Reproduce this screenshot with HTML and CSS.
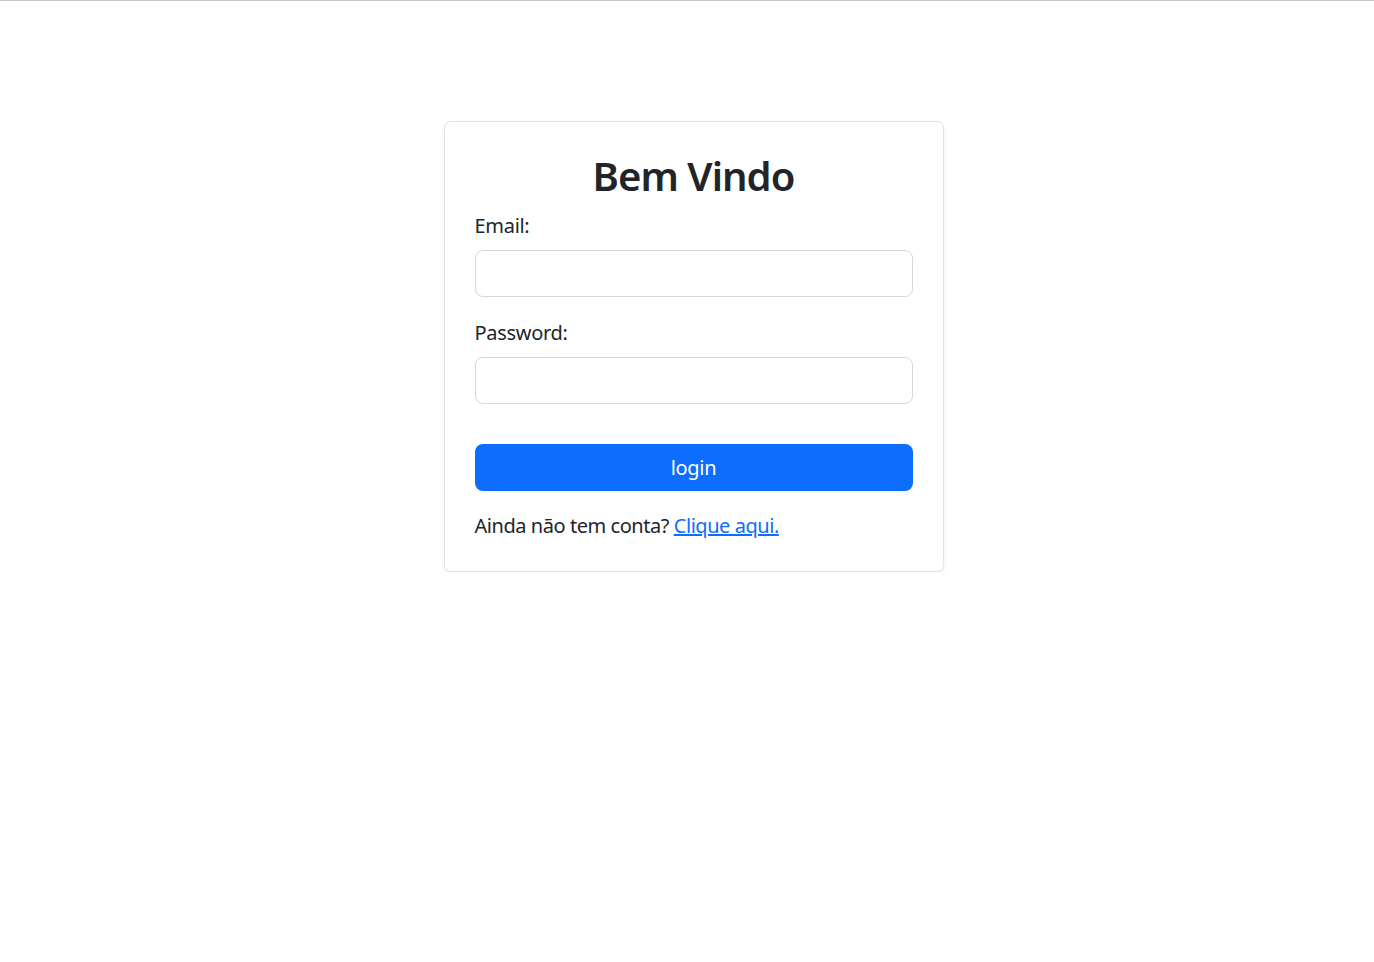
FILE: index.html
```html
<!DOCTYPE html>
<html lang="pt">
<head>
<meta charset="utf-8">
<title>Login</title>
<link rel="stylesheet" href="styles.css">
</head>
<body>
<div class="topline"></div>
<main class="page">
  <form class="card">
    <h1 class="title">Bem Vindo</h1>
    <label class="label" for="email">Email:</label>
    <input class="input" id="email" type="email">
    <label class="label label-spaced" for="password">Password:</label>
    <input class="input" id="password" type="password">
    <button class="btn" type="button">login</button>
    <p class="note">Ainda não tem conta? <a class="link" href="#">Clique aqui.</a></p>
  </form>
</main>
</body>
</html>
```
FILE: styles.css
```css
* { box-sizing: border-box; }
html, body { margin: 0; padding: 0; background: #fff; }
body {
  font-family: "Noto Sans", "Open Sans", sans-serif;
  color: #212529;
}
.topline { height: 1px; background: #c8c8c8; }
.page {
  display: flex;
  justify-content: center;
  padding: 120px 0 0 13px;
}
.card {
  width: 500px;
  display: flex;
  flex-direction: column;
  padding: 30px 30px 30px;
  border: 1px solid #e2e3e5;
  border-radius: 7px;
  box-shadow: 0 2px 4px rgba(0,0,0,0.075);
  background: #fff;
}
.title {
  margin: 0 0 11px;
  font-size: 40px;
  line-height: 48px;
  font-weight: 600;
  text-align: center;
  letter-spacing: -0.95px;
}
.label {
  font-size: 20px;
  line-height: 30px;
  margin-bottom: 9px;
  letter-spacing: -0.3px;
}
.label-spaced { margin-top: 21px; }
.input {
  height: 47px;
  width: 100%;
  border: 1px solid #d5d8dc;
  border-radius: 8px;
  font: inherit;
  font-size: 20px;
  padding: 0 16px;
}
.btn {
  margin-top: 40px;
  height: 47px;
  border: none;
  border-radius: 8px;
  background: #0d6efd;
  color: #fff;
  font-family: inherit;
  font-size: 20px;
  cursor: pointer;
  letter-spacing: -0.3px;
}
.note {
  margin: 20px 0 0;
  font-size: 20px;
  line-height: 30px;
  letter-spacing: -0.45px;
}
.link { color: #0d6efd; text-decoration: underline; }
```
